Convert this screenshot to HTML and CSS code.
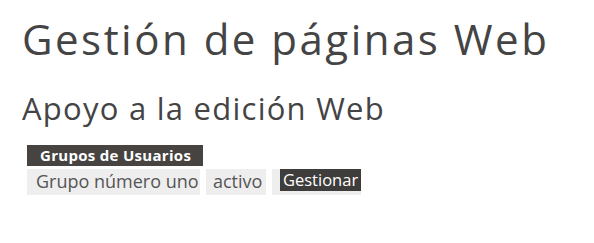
FILE: index.html
```html
<!DOCTYPE html>
<html lang="es">
<head>
<meta charset="utf-8">
<title>Gestión de páginas Web</title>
<link rel="stylesheet" href="styles.css">
</head>
<body>
<main class="page">
  <h1 class="title">Gestión de páginas Web</h1>
  <h2 class="subtitle">Apoyo a la edición Web</h2>
  <section class="groups">
    <div class="groups-head">Grupos de Usuarios</div>
    <div class="groups-row">
      <span class="cell cell-name">Grupo número uno</span>
      <span class="cell cell-state">activo</span>
      <span class="cell cell-action"><a class="btn" href="#">Gestionar</a></span>
    </div>
  </section>
</main>
</body>
</html>
```
FILE: styles.css
```css
html, body {
  margin: 0;
  padding: 0;
  background: #fff;
}
body {
  font-family: "Open Sans", Lato, "Liberation Sans", sans-serif;
  color: #444;
}
.page {
  padding: 14px 0 0 22px;
}
.title {
  margin: 0;
  font-size: 42px;
  font-weight: 400;
  letter-spacing: 2.5px;
  line-height: 50px;
  color: #444;
}
.subtitle {
  margin: 26px 0 0 0;
  font-size: 31px;
  font-weight: 400;
  letter-spacing: 1.25px;
  line-height: 36px;
  color: #444;
}
.groups {
  margin: 19px 0 0 5px;
}
.groups-head {
  width: 176px;
  height: 21px;
  background: #464341;
  color: #fff;
  font-weight: 700;
  font-size: 15px;
  letter-spacing: 0.3px;
  line-height: 20px;
  padding-left: 13px;
  box-sizing: border-box;
}
.groups-row {
  display: flex;
  gap: 6px;
  margin-top: 3px;
}
.cell {
  background: #eee;
  height: 26px;
  box-sizing: border-box;
  font-size: 18px;
  line-height: 24px;
  color: #555;
  white-space: nowrap;
}
.cell-name {
  width: 173px;
  padding-left: 9px;
}
.cell-state {
  width: 60px;
  padding-left: 7px;
}
.cell-action {
  width: 89px;
  padding: 0 0 0 8px;
}
.btn {
  display: block;
  width: 81px;
  height: 22px;
  background: #3f3d3c;
  color: #fff;
  text-decoration: none;
  font-size: 16.5px;
  line-height: 21px;
  padding-left: 3px;
  box-sizing: border-box;
}
```
